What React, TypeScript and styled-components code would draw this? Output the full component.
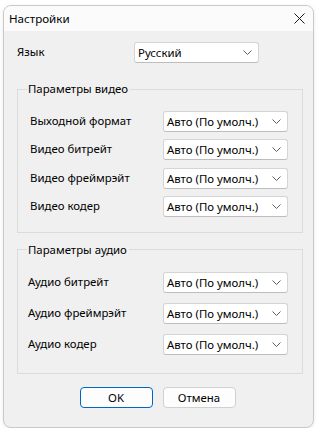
import React from "react";
import styled, { createGlobalStyle } from "styled-components";

const GlobalStyle = createGlobalStyle`
	html, body {
		margin: 0;
		padding: 0;
		background: #ffffff;
	}
	body {
		font-family: "Noto Sans", "Open Sans", sans-serif;
		font-size: 11.4px;
		color: #000000;
	}
`;

const Window = styled.div`
	margin: 5px 0 0 3px;
	width: 311px;
	height: 423px;
	box-sizing: border-box;
	border: 1px solid #c9c9c9;
	border-radius: 8px;
	background: #f0f0f0;
	overflow: hidden;
	display: flex;
	flex-direction: column;
	box-shadow: 0 1px 4px rgba(0, 0, 0, 0.08);
`;

const TitleBar = styled.div`
	height: 25px;
	display: flex;
	align-items: center;
	justify-content: space-between;
	padding: 0 8px 0 5px;
	background: #fbfbfb;
`;

const Title = styled.span`
	font-size: 11.6px;
	line-height: 1;
`;

const CloseButton = styled.button`
	border: none;
	background: transparent;
	padding: 0;
	width: 12px;
	height: 12px;
	display: flex;
	align-items: center;
	justify-content: center;
`;

const Body = styled.div`
	flex: 1;
	display: flex;
	flex-direction: column;
	padding: 11px 11px 0 13px;
`;

const Row = styled.div<{ $labelWidth: number }>`
	display: grid;
	grid-template-columns: ${(p) => p.$labelWidth}px 125px;
	align-items: center;
	height: 21px;
`;

const Label = styled.span`
	white-space: nowrap;
	padding-bottom: 2px;
`;

const ComboBox = styled.div`
	height: 21px;
	box-sizing: border-box;
	background: #ffffff;
	border: 1px solid #d4d4d4;
	border-bottom-color: #bdbdbd;
	border-radius: 3px;
	display: flex;
	align-items: center;
	justify-content: space-between;
	padding: 0 6px 0 3px;
`;

const Group = styled.fieldset<{ $top: number }>`
	margin: ${(p) => p.$top}px 0 0 0;
	padding: 0;
	border: 1px solid #dcdcdc;
	border-radius: 0;
	min-width: 0;
	width: 286px;
	box-sizing: border-box;
`;

const Legend = styled.legend`
	margin-left: 9px;
	padding: 0 2px 0 1px;
	line-height: 14px;
`;

const GroupRows = styled.div<{ $inset: number; $gap: number; $top: number; $bottom: number }>`
	display: flex;
	flex-direction: column;
	gap: ${(p) => p.$gap}px;
	padding: ${(p) => p.$top}px 0 ${(p) => p.$bottom}px ${(p) => p.$inset}px;
`;

const Buttons = styled.div`
	display: flex;
	justify-content: center;
	gap: 10px;
	margin-top: 13px;
	padding-right: 4px;
`;

const Button = styled.button<{ $primary?: boolean }>`
	width: 73px;
	height: 21px;
	box-sizing: border-box;
	font-family: inherit;
	font-size: 11.4px;
	color: #000000;
	background: #fdfdfd;
	border: 1px solid ${(p) => (p.$primary ? "#0067c0" : "#d0d0d0")};
	border-radius: 4px;
	padding: 0 0 1px;
`;

const Chevron = () => (
	<svg width="9" height="5" viewBox="0 0 9 5">
		<path d="M0.5 0.5 L4.5 4.5 L8.5 0.5" fill="none" stroke="#5f5f5f" strokeWidth="1" />
	</svg>
);

const Select = ({ value }: { value: string }) => (
	<ComboBox>
		<span>{value}</span>
		<Chevron />
	</ComboBox>
);

const DEFAULT = "Авто (По умолч.)";

const video = ["Выходной формат", "Видео битрейт", "Видео фреймрэйт", "Видео кодер"];
const audio = ["Аудио битрейт", "Аудио фреймрэйт", "Аудио кодер"];

export default function App() {
	return (
		<>
			<GlobalStyle />
			<Window>
				<TitleBar>
					<Title>Настройки</Title>
					<CloseButton>
						<svg width="11" height="11" viewBox="0 0 11 11">
							<path d="M0.5 0.5 L10.5 10.5 M10.5 0.5 L0.5 10.5" stroke="#1a1a1a" strokeWidth="1" />
						</svg>
					</CloseButton>
				</TitleBar>
				<Body>
					<Row $labelWidth={117}>
						<Label>Язык</Label>
						<Select value="Русский" />
					</Row>
					<Group $top={19}>
						<Legend>Параметры видео</Legend>
						<GroupRows $inset={12} $gap={7.3} $top={15} $bottom={15}>
							{video.map((l) => (
								<Row key={l} $labelWidth={133}>
									<Label>{l}</Label>
									<Select value={DEFAULT} />
								</Row>
							))}
						</GroupRows>
					</Group>
					<Group $top={10}>
						<Legend>Параметры аудио</Legend>
						<GroupRows $inset={10} $gap={10.3} $top={15} $bottom={18}>
							{audio.map((l) => (
								<Row key={l} $labelWidth={135}>
									<Label>{l}</Label>
									<Select value={DEFAULT} />
								</Row>
							))}
						</GroupRows>
					</Group>
					<Buttons>
						<Button $primary>OK</Button>
						<Button>Отмена</Button>
					</Buttons>
				</Body>
			</Window>
		</>
	);
}
